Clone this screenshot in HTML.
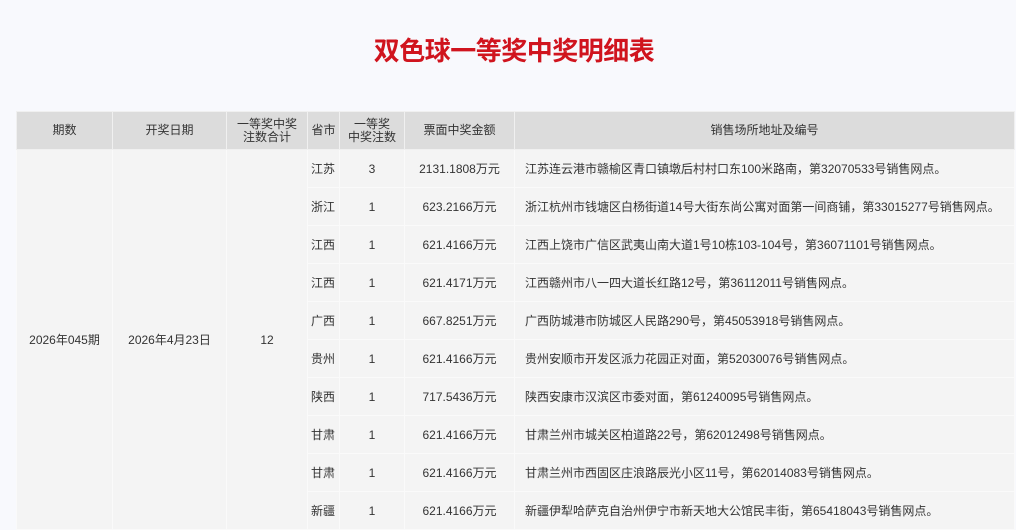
<!DOCTYPE html>
<html><head><meta charset="utf-8"><style>
body{margin:0;background:#f8f9fd;font-family:"Liberation Sans","Noto Sans CJK SC",sans-serif;width:1016px;height:529px;overflow:hidden;position:relative}
h1{position:absolute;top:34px;left:0;width:1028px;margin:0;text-align:center;color:#d0141e;font-size:26px;font-weight:bold;line-height:34px;letter-spacing:-0.5px}
table{position:absolute;left:16px;top:111px;border-collapse:collapse;table-layout:fixed;width:998px;font-size:12px;color:#333}
th{background:#dcdcdc;font-weight:normal;height:37px;padding:0;border:1px solid #f0f0f0;line-height:13px;color:#333}
td{background:#f4f4f4;height:37px;border:1px solid #fafafa;text-align:center;padding:0}
td.p{text-align:left;padding-left:3px}
td.a{text-align:left;padding-left:10px}
</style></head><body>
<h1>双色球一等奖中奖明细表</h1>
<table>
<colgroup><col style="width:96px"><col style="width:114px"><col style="width:81px"><col style="width:32px"><col style="width:65px"><col style="width:110px"><col style="width:500px"></colgroup>
<tr><th>期数</th><th>开奖日期</th><th>一等奖中奖<br>注数合计</th><th>省市</th><th>一等奖<br>中奖注数</th><th>票面中奖金额</th><th>销售场所地址及编号</th></tr>
<tr><td rowspan="10">2026年045期</td><td rowspan="10">2026年4月23日</td><td rowspan="10">12</td><td class="p">江苏</td><td>3</td><td>2131.1808万元</td><td class="a">江苏连云港市赣榆区青口镇墩后村村口东100米路南，第32070533号销售网点。</td></tr>
<tr><td class="p">浙江</td><td>1</td><td>623.2166万元</td><td class="a">浙江杭州市钱塘区白杨街道14号大街东尚公寓对面第一间商铺，第33015277号销售网点。</td></tr>
<tr><td class="p">江西</td><td>1</td><td>621.4166万元</td><td class="a">江西上饶市广信区武夷山南大道1号10栋103-104号，第36071101号销售网点。</td></tr>
<tr><td class="p">江西</td><td>1</td><td>621.4171万元</td><td class="a">江西赣州市八一四大道长红路12号，第36112011号销售网点。</td></tr>
<tr><td class="p">广西</td><td>1</td><td>667.8251万元</td><td class="a">广西防城港市防城区人民路290号，第45053918号销售网点。</td></tr>
<tr><td class="p">贵州</td><td>1</td><td>621.4166万元</td><td class="a">贵州安顺市开发区派力花园正对面，第52030076号销售网点。</td></tr>
<tr><td class="p">陕西</td><td>1</td><td>717.5436万元</td><td class="a">陕西安康市汉滨区市委对面，第61240095号销售网点。</td></tr>
<tr><td class="p">甘肃</td><td>1</td><td>621.4166万元</td><td class="a">甘肃兰州市城关区柏道路22号，第62012498号销售网点。</td></tr>
<tr><td class="p">甘肃</td><td>1</td><td>621.4166万元</td><td class="a">甘肃兰州市西固区庄浪路辰光小区11号，第62014083号销售网点。</td></tr>
<tr><td class="p">新疆</td><td>1</td><td>621.4166万元</td><td class="a">新疆伊犁哈萨克自治州伊宁市新天地大公馆民丰街，第65418043号销售网点。</td></tr>
</table>
</body></html>
